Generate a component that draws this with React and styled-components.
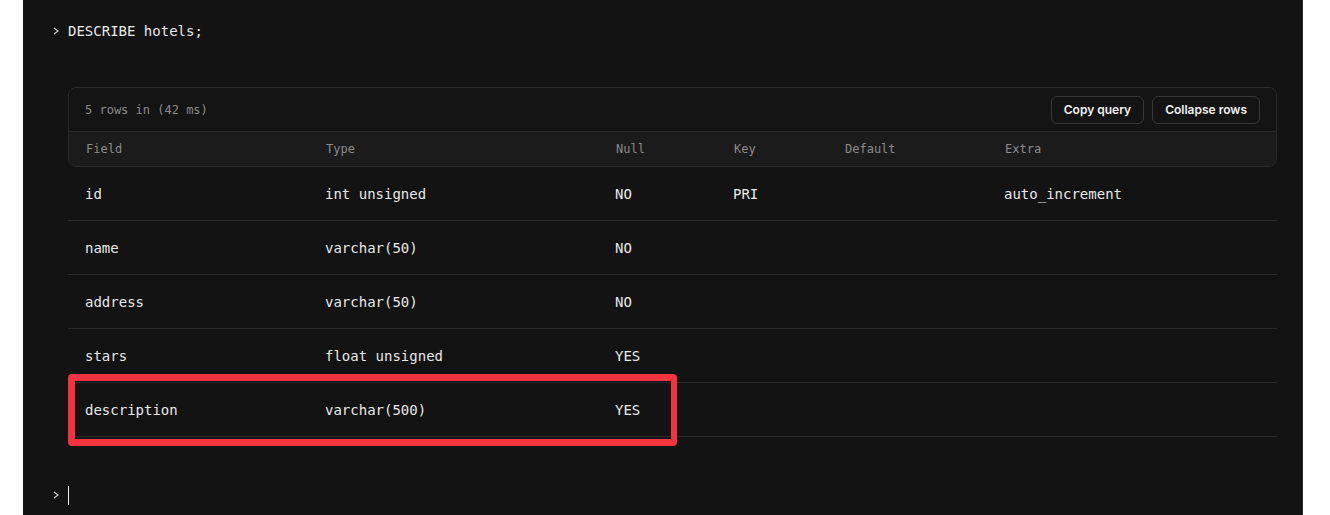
import React from "react";
import styled, { createGlobalStyle } from "styled-components";

const Global = createGlobalStyle`
  html, body { margin: 0; padding: 0; background: #ffffff; }
  * { box-sizing: border-box; }
`;

const Page = styled.div`
  padding-left: 23px;
  background: #ffffff;
`;

const Terminal = styled.div`
  width: 1280px;
  min-height: 515px;
  background: #131313;
  border-right: 1px solid #2a2a2a;
  padding: 20px 25px 0 30px;
  font-family: "DejaVu Sans Mono", monospace;
  color: #e8e8e8;
`;

const PromptLine = styled.div`
  display: flex;
  align-items: center;
  height: 22px;
  gap: 9px;
  margin-top: ${(p) => p.$mt || 0}px;
  font-size: 14px;
`;

const Chevron = styled.svg`
  width: 6px;
  height: 8px;
  flex: none;
`;

const Cursor = styled.span`
  display: block;
  width: 1px;
  height: 19px;
  background: #f2f2f2;
`;

const Results = styled.div`
  margin: 45px 0 0 15px;
`;

const Card = styled.div`
  border: 1px solid #2a2a2a;
  border-radius: 8px;
  overflow: hidden;
`;

const CardHeader = styled.div`
  height: 44px;
  display: flex;
  align-items: center;
  justify-content: space-between;
  padding: 0 16px;
  border-bottom: 1px solid #2a2a2a;
  background: #141414;
`;

const Meta = styled.span`
  font-size: 12px;
  color: #8a8a8a;
`;

const Actions = styled.div`
  display: flex;
  gap: 8px;
`;

const Button = styled.button`
  height: 28px;
  padding: 0 12px;
  border: 1px solid #383838;
  border-radius: 6px;
  background: #141414;
  color: #f0f0f0;
  font-family: Inter, "Noto Sans", sans-serif;
  font-size: 12px;
  font-weight: 600;
  cursor: pointer;
`;

const Grid = styled.div`
  display: grid;
  grid-template-columns: 240px 290px 118px 111px 160px 1fr;
  align-items: center;
`;

const HeadRow = styled(Grid)`
  height: 34px;
  background: #1b1b1b;
`;

const HeadCell = styled.div`
  padding-left: 17px;
  font-size: 12px;
  color: #8a8a8a;
`;

const Row = styled(Grid)`
  position: relative;
  height: 54px;
  border-bottom: 1px solid #2a2a2a;
`;

const Cell = styled.div`
  padding-left: 17px;
  font-size: 14px;
  color: #e8e8e8;
  white-space: pre;
`;

const Highlight = styled.div`
  position: absolute;
  left: 0;
  top: -9px;
  width: 609px;
  height: 72px;
  border: 7px solid #f3333f;
  border-right-width: 6px;
  border-radius: 4px;
  pointer-events: none;
`;

const columns = ["Field", "Type", "Null", "Key", "Default", "Extra"];
const rows = [
  ["id", "int unsigned", "NO", "PRI", "", "auto_increment"],
  ["name", "varchar(50)", "NO", "", "", ""],
  ["address", "varchar(50)", "NO", "", "", ""],
  ["stars", "float unsigned", "YES", "", "", ""],
  ["description", "varchar(500)", "YES", "", "", ""],
];

const Prompt = () => (
  <Chevron viewBox="0 0 6 8">
    <polyline points="1,1 5,4 1,7" fill="none" stroke="#c8c8c8" strokeWidth="1.3" />
  </Chevron>
);

export default function App() {
  return (
    <Page>
      <Global />
      <Terminal>
        <PromptLine>
          <Prompt />
          <span>DESCRIBE hotels;</span>
        </PromptLine>
        <Results>
          <Card>
            <CardHeader>
              <Meta>5 rows in (42 ms)</Meta>
              <Actions>
                <Button>Copy query</Button>
                <Button>Collapse rows</Button>
              </Actions>
            </CardHeader>
            <HeadRow>
              {columns.map((c) => (
                <HeadCell key={c}>{c}</HeadCell>
              ))}
            </HeadRow>
          </Card>
          {rows.map((r, i) => (
            <Row key={r[0]}>
              {r.map((v, j) => (
                <Cell key={j}>{v}</Cell>
              ))}
              {i === rows.length - 1 && <Highlight />}
            </Row>
          ))}
        </Results>
        <PromptLine $mt={47}>
          <Prompt />
          <Cursor />
        </PromptLine>
      </Terminal>
    </Page>
  );
}
